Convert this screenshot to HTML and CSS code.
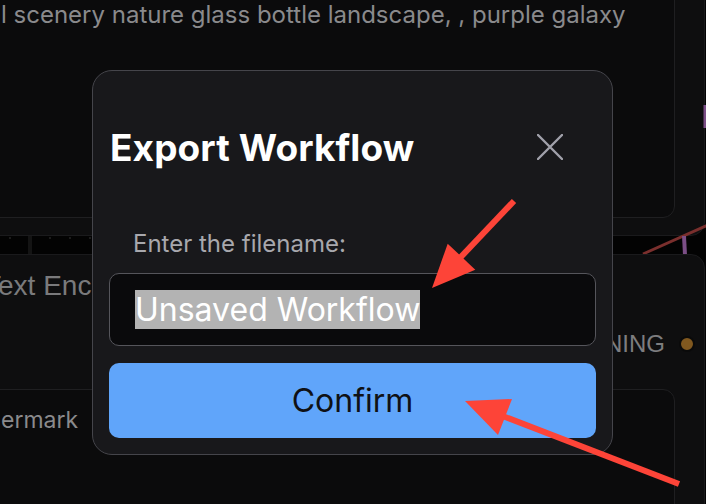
FILE: index.html
```html
<!DOCTYPE html>
<html lang="en">
<head>
<meta charset="utf-8">
<title>Export Workflow</title>
<link rel="stylesheet" href="styles.css">
</head>
<body>
<div class="canvas">
  <div class="node node-a">
    <div class="textarea ta-a">l scenery nature glass bottle landscape, , purple galaxy</div>
  </div>

  <div class="gap-bar"></div>
  <div class="grid-dot" style="left:9px;top:237px"></div>
  <div class="grid-dot" style="left:49px;top:237px"></div>
  <div class="grid-dot" style="left:69px;top:237px"></div>
  <div class="grid-dot" style="left:89px;top:237px"></div>

  <svg class="links" width="706" height="504" viewBox="0 0 706 504">
    <line x1="643" y1="254" x2="710" y2="224" stroke="#7a2f2d" stroke-width="3"/>
    <line x1="684" y1="236" x2="685" y2="255" stroke="#7b4e86" stroke-width="4"/>
    <line x1="705" y1="105" x2="705" y2="128" stroke="#7b4e86" stroke-width="3"/>
  </svg>

  <div class="node node-b">
    <div class="node-title">Text Encode</div>
    <div class="output-row">
      <span class="output-label">CONDITIONING</span>
      <span class="slot-dot"></span>
    </div>
    <div class="textarea ta-b">ermark</div>
  </div>
</div>

<div class="dialog">
  <div class="dialog-header">
    <h2 class="dialog-title">Export Workflow</h2>
    <button class="close-btn" aria-label="Close">
      <svg width="26" height="26" viewBox="0 0 26 26">
        <path d="M1 1 L25 25 M25 1 L1 25" stroke="#a1a1aa" stroke-width="2.4" stroke-linecap="round" fill="none"/>
      </svg>
    </button>
  </div>
  <div class="dialog-body">
    <label class="field-label">Enter the filename:</label>
    <div class="field-input"><span class="selected">Unsaved Workflow</span></div>
    <button class="confirm-btn">Confirm</button>
  </div>
</div>

<svg class="arrows" width="706" height="504" viewBox="0 0 706 504">
  <line x1="514" y1="201" x2="458" y2="260" stroke="#fd4438" stroke-width="6"/>
  <polygon points="432,288 447.7,243.7 475.3,269.7" fill="#fd4438"/>
  <line x1="679" y1="484" x2="500" y2="415" stroke="#fd4438" stroke-width="6"/>
  <polygon points="465,401 512,399 498,435" fill="#fd4438"/>
</svg>
</body>
</html>
```

FILE: styles.css
```css
* { box-sizing: border-box; }

html, body {
  margin: 0;
  padding: 0;
}

body {
  width: 706px;
  height: 504px;
  background: #030303;
  position: relative;
  overflow: hidden;
  font-family: Inter, "Noto Sans", sans-serif;
}

.canvas {
  position: absolute;
  inset: 0;
}

.node {
  position: absolute;
  background: #0e0e0f;
  border: 1px solid #1a1a1c;
  border-radius: 14px;
}

.node-a {
  left: -20px;
  top: -20px;
  width: 725px;
  height: 256px;
  padding: 0 29px 17px 0;
  display: flex;
}

.textarea {
  background: #0b0b0c;
  border: 1px solid #1f1f21;
  border-radius: 12px;
  color: #8a8a8c;
  font-family: Inter, sans-serif;
  font-size: 24px;
  line-height: 29px;
  white-space: nowrap;
}

.ta-a {
  flex: 1;
  padding: 18px 0 0 19px;
}

.gap-bar {
  position: absolute;
  left: 28px;
  top: 236px;
  width: 4px;
  height: 18px;
  background: #141414;
}

.grid-dot {
  position: absolute;
  width: 2px;
  height: 2px;
  background: #1c1c1c;
}

.links {
  position: absolute;
  left: 0;
  top: 0;
}

.node-b {
  left: -20px;
  top: 254px;
  width: 725px;
  height: 300px;
  padding: 0 29px 0 0;
  display: flex;
  flex-direction: column;
}

.node-title {
  font-family: "Liberation Sans", Arial, sans-serif;
  font-size: 28px;
  line-height: 32px;
  color: #7a7a7c;
  margin-top: 15px;
  padding-left: 3px;
  white-space: nowrap;
}

.output-row {
  display: flex;
  align-items: center;
  justify-content: flex-end;
  margin-top: 29px;
  margin-right: -20px;
  gap: 14px;
  height: 26px;
}

.output-label {
  font-family: "Liberation Sans", Arial, sans-serif;
  font-size: 24px;
  color: #7d7d7f;
}

.slot-dot {
  width: 16px;
  height: 16px;
  border-radius: 50%;
  background: #80581f;
  border: 2px solid #0a0a0a;
}

.ta-b {
  margin-top: 32px;
  flex: 1;
  border-right: 1px solid #1f1f21;
  padding: 16px 0 0 19px;
  font-size: 23px;
}

/* dialog */
.dialog {
  position: absolute;
  left: 92px;
  top: 70px;
  width: 521px;
  height: 385px;
  background: #18181b;
  border: 1.5px solid #45454b;
  border-radius: 20px;
  padding: 0 16px 16px 16px;
  display: flex;
  flex-direction: column;
}

.dialog-header {
  display: flex;
  align-items: center;
  justify-content: space-between;
  height: 48px;
  margin-top: 52px;
}

.dialog-title {
  margin: 0 0 0 1px;
  font-size: 37px;
  font-weight: 700;
  color: #ffffff;
  letter-spacing: 0.1px;
}

.close-btn {
  background: none;
  border: none;
  padding: 0;
  width: 26px;
  height: 26px;
  margin-right: 33px;
  display: flex;
  align-items: center;
  justify-content: center;
}

.dialog-body {
  display: flex;
  flex-direction: column;
}

.field-label {
  margin-top: 58px;
  margin-left: 24px;
  font-size: 24px;
  line-height: 29px;
  color: #a8a8ad;
}

.field-input {
  margin-top: 15px;
  height: 73px;
  background: #0a0a0c;
  border: 1.5px solid #55555b;
  border-radius: 10px;
  display: flex;
  align-items: center;
  padding-left: 25px;
}

.selected {
  background: #b3b3b3;
  color: #ffffff;
  font-size: 32px;
  line-height: 39px;
}

.confirm-btn {
  margin-top: 17px;
  height: 75px;
  background: #60a5fa;
  border: none;
  border-radius: 10px;
  font-family: Inter, sans-serif;
  font-size: 32px;
  color: #0f1115;
  padding: 0;
}

.arrows {
  position: absolute;
  left: 0;
  top: 0;
}
```
